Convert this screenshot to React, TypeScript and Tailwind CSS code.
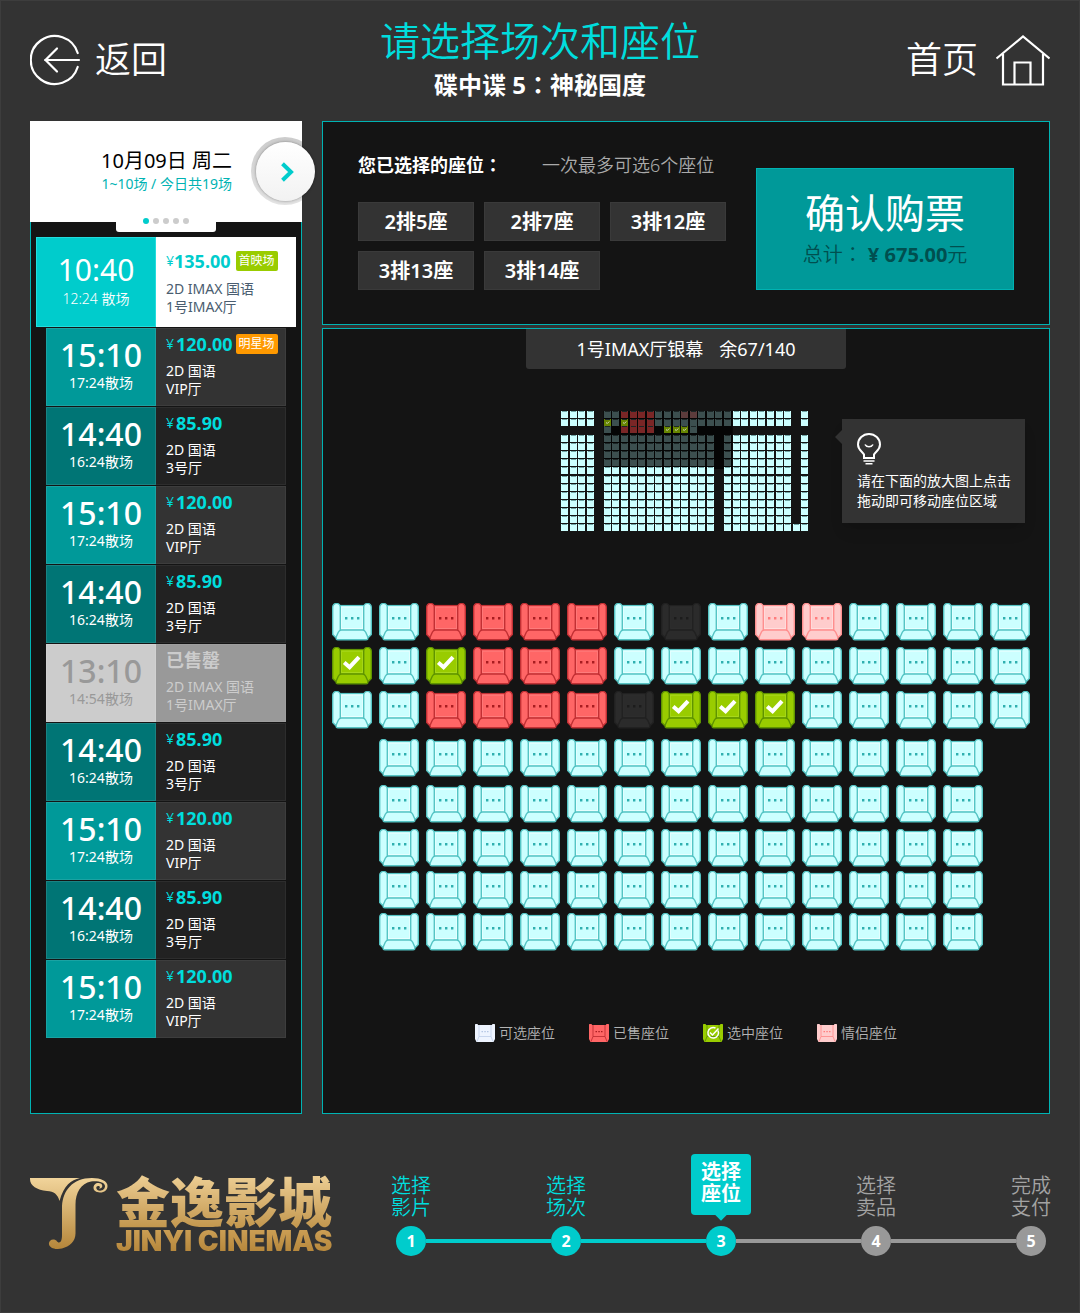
import React from "react";

type SeatKind = "free" | "sold" | "picked" | "couple" | "off";

const SEAT_COLOURS: Record<SeatKind, { fill: string; line: string; light: string; dot: string }> = {
  free: { fill: "#ccffff", line: "#55c4c4", light: "#e8ffff", dot: "#2fb0b0" },
  sold: { fill: "#ff6666", line: "#c23034", light: "#ff7c7c", dot: "#a81c20" },
  picked: { fill: "#99cc00", line: "#5f9400", light: "#a8d81c", dot: "#99cc00" },
  couple: { fill: "#ffcccc", line: "#ff8f8f", light: "#ffdede", dot: "#ff7c7c" },
  off: { fill: "#2b2b2b", line: "#212121", light: "#2d2d2d", dot: "#1c1c1c" },
};

const SEAT_NAMES: Record<SeatKind, string> = {
  free: "可选座位",
  sold: "已售座位",
  picked: "选中座位",
  couple: "情侣座位",
  off: "不可用座位",
};

const KIND: Record<string, SeatKind> = { A: "free", R: "sold", G: "picked", C: "couple", D: "off" };

function SeatArt({ kind }: { kind: SeatKind }) {
  const c = SEAT_COLOURS[kind];
  return (
    <svg viewBox="0 0 40 38" className="block h-full w-full" aria-hidden="true">
      <rect x="7" y="2.5" width="26" height="25" fill={c.fill} stroke={c.line} strokeWidth="1.2" />
      <path d="M9.3 25.5V4.2h21.4V25.5z" fill="none" stroke={c.light} strokeWidth="1" />
      <path d="M0.7 4.2a3.8 3.8 0 0 1 7.6 0V27L5 34H3.2L0.7 31.5z" fill={c.fill} stroke={c.line} strokeWidth="1.4" />
      <path d="M39.3 4.2a3.8 3.8 0 0 0-7.6 0V27l3.3 7h1.800l2.5-2.5z" fill={c.fill} stroke={c.line} strokeWidth="1.4" />
      <path
        d="M9.500 27h21c1.800 0 2.600.8 3.200 2.200l2.100 4.800c.5 1.900-.2 2.800-1.800 2.800H6c-1.600 0-2.300-.9-1.800-2.800l2.100-4.800c.6-1.400 1.400-2.200 3.200-2.200z"
        fill={c.fill}
        stroke={c.line}
        strokeWidth="1.4"
      />
      {kind === "picked" ? (
        <path d="M12.2 15.5l5.4 4.7 9.4-10" fill="none" stroke="#fff" strokeWidth="4" />
      ) : (
        <path d="M13 14h2.400v2.400H13zM19 14h2.400v2.400H19zM25 14h2.400v2.400H25z" fill={c.dot} />
      )}
    </svg>
  );
}

const SEAT_ROWS: { seats: string; space: string }[] = [
  { seats: "AARRRRADACCAAAA", space: "" },
  { seats: "GAGRRRAAAAAAAAA", space: "mt-1.5" },
  { seats: "AARRRRDGGGAAAAA", space: "mt-1.5" },
  { seats: "AAAAAAAAAAAAA", space: "mt-2.5" },
  { seats: "AAAAAAAAAAAAA", space: "mt-2" },
  { seats: "AAAAAAAAAAAAA", space: "mt-1.5" },
  { seats: "AAAAAAAAAAAAA", space: "mt-1" },
  { seats: "AAAAAAAAAAAAA", space: "mt-1" },
];

const MINI_ROWS = [
  "AAAA.AARRRRAAACCAAAAAAAAAAA.A",
  "AAAA.GAGRRRAAAAAAAAAAAAAAAA.A",
  ".....A.RRRR.GGGA.............",
  ...Array.from({ length: 11 }, () => "AAAA.AAAAAAAAAAAAA.AAAAAAAA.A"),
  "AAAA.AAAAAAAAAAAAA.AAAAAAAAAA",
];

const MINI_DIM: Record<string, string> = { A: "#3c4f4f", R: "#7a2626", G: "#668500", C: "#5c3c3c" };

function MiniMap() {
  return (
    <svg viewBox="0 0 248 121" className="block h-[121px] w-[248px]" role="img" aria-label="座位缩略图">
      <rect x="42.700" y="0" width="129" height="58" fill="#050505" />
      {MINI_ROWS.map((row, r) =>
        row.split("").map((s, c) => {
          if (s === ".") return null;
          const dim = r < 7 && c >= 5 && c <= 19;
          const x = Math.round(c * 8.58);
          const y = r === 2 ? 15 : Math.round(r * 8.07);
          return (
            <g key={`${r}-${c}`}>
              <rect x={x} y={y} width="7" height="7" fill={dim ? MINI_DIM[s] : "#ccffff"} />
              <path d={`M${x + 1} ${y + 0.5}h5`} stroke={dim ? "#1c2626" : "#6fa3a3"} strokeWidth="1" />
              {s === "G" && <path d={`M${x + 2} ${y + 3.5}l1.300 1 2-2`} stroke="#e6e6e6" fill="none" strokeWidth="0.800" />}
            </g>
          );
        }),
      )}
    </svg>
  );
}

type Show = { time: string; end: string; price: string; lines: [string, string]; tag?: string; tone: "light" | "dark" | "sold" };

const SHOWS: Show[] = [
  { time: "15:10", end: "17:24散场", price: "120.00", lines: ["2D 国语", "VIP厅"], tag: "明星场", tone: "light" },
  { time: "14:40", end: "16:24散场", price: "85.90", lines: ["2D 国语", "3号厅"], tone: "dark" },
  { time: "15:10", end: "17:24散场", price: "120.00", lines: ["2D 国语", "VIP厅"], tone: "light" },
  { time: "14:40", end: "16:24散场", price: "85.90", lines: ["2D 国语", "3号厅"], tone: "dark" },
  { time: "13:10", end: "14:54散场", price: "", lines: ["2D IMAX 国语", "1号IMAX厅"], tone: "sold" },
  { time: "14:40", end: "16:24散场", price: "85.90", lines: ["2D 国语", "3号厅"], tone: "dark" },
  { time: "15:10", end: "17:24散场", price: "120.00", lines: ["2D 国语", "VIP厅"], tone: "light" },
  { time: "14:40", end: "16:24散场", price: "85.90", lines: ["2D 国语", "3号厅"], tone: "dark" },
  { time: "15:10", end: "17:24散场", price: "120.00", lines: ["2D 国语", "VIP厅"], tone: "light" },
];

const TONES = {
  light: { time: "bg-[#009999] text-white", info: "bg-[#333333] text-white" },
  dark: { time: "bg-[#007575] text-white", info: "bg-[#222222] text-white" },
  sold: { time: "bg-[#cccccc] text-[#999999]", info: "bg-[#999999] text-[#cccccc]" },
};

function ShowItem({ show }: { show: Show }) {
  const tone = TONES[show.tone];
  return (
    <li>
      <button type="button" disabled={show.tone === "sold"} className="flex h-[78px] w-full text-left">
        <span className={`flex w-[110px] shrink-0 flex-col items-center border border-white/10 pt-2 ${tone.time}`}>
          <span className="text-[32px] leading-9 font-medium">{show.time}</span>
          <span className="text-sm leading-5">{show.end}</span>
        </span>
        <span className={`flex h-full flex-1 flex-col border-y border-r border-white/5 pt-[3px] pl-2.5 ${tone.info}`}>
          {show.tone === "sold" ? (
            <span className="text-lg leading-6 font-bold">已售罄</span>
          ) : (
            <span className="flex h-6 items-center text-[#00dddd]">
              <span className="w-2.5 text-sm leading-5">¥</span>
              <span className="text-lg leading-6 font-bold">{show.price}</span>
              {show.tag && (
                <span className="ml-[3px] rounded-xs bg-[#ff9900] px-[3px] text-xs leading-5 whitespace-nowrap text-white">{show.tag}</span>
              )}
            </span>
          )}
          <span className="mt-1.5 text-sm leading-[18px]">
            {show.lines[0]}
            <br />
            {show.lines[1]}
          </span>
        </span>
      </button>
    </li>
  );
}

function Colon() {
  return <span className="leading-none font-['Noto_Sans_CJK_TC',sans-serif]">：</span>;
}

const STEPS = [
  { a: "选择", b: "影片", state: "done" },
  { a: "选择", b: "场次", state: "done" },
  { a: "选择", b: "座位", state: "now" },
  { a: "选择", b: "卖品", state: "next" },
  { a: "完成", b: "支付", state: "next" },
];

export default function App() {
  return (
    <div className="min-h-screen border border-[#3d3d3d] bg-[#333333] px-[29px] font-['Noto_Sans','Noto_Sans_CJK_SC',sans-serif] text-white">
      <header className="grid h-[120px] grid-cols-[1fr_auto_1fr] items-start">
        <a href="#back" className="mt-[33px] flex items-center gap-[13px] justify-self-start">
          <svg viewBox="0 0 52 52" className="h-[52px] w-[52px]" fill="none" stroke="#fff" strokeWidth="2.200" strokeLinecap="round" aria-hidden="true">
            <path d="M47.700 19A24 24 0 1 0 47.700 33" />
            <path d="M49 26H15M27 14.500L15.500 26 27 37.500" />
          </svg>
          <span className="text-4xl leading-[52px] font-[350]">返回</span>
        </a>
        <div className="pt-[14px] text-center">
          <h1 className="text-[40px] leading-[52px] font-[350] text-[#00dddd]">请选择场次和座位</h1>
          <p className="text-2xl leading-9 font-bold">
            碟中谍 5<Colon />
            神秘国度
          </p>
        </div>
        <a href="#home" className="mt-[33px] flex items-center gap-4 justify-self-end">
          <span className="text-4xl leading-[52px] font-[350]">首页</span>
          <svg viewBox="0 0 56 52" className="h-[52px] w-14" fill="none" stroke="#fff" strokeWidth="2.200" aria-hidden="true">
            <path d="M2.500 24.500L29 2.500l26.500 22" />
            <path d="M9 20v30.500h40V20" />
            <path d="M20.500 50V28.500h16V50" />
          </svg>
        </a>
      </header>

      <main className="flex gap-5">
        <aside className="flex w-[272px] shrink-0 flex-col border border-[#00b3b3] bg-[#141414]">
          <div className="relative -mx-px -mt-px h-[101px] bg-white">
            <div className="absolute inset-0 overflow-hidden">
              <span className="absolute top-4 left-[221px] h-[68px] w-[68px] rounded-full bg-linear-to-b from-[#cccccc] to-[#e3e3e3]" />
            </div>
            <div className="pt-[27px] pr-[70px] text-right">
              <p className="text-xl leading-[26px] text-black">10月09日 周二</p>
              <p className="text-sm leading-5 text-[#00b3b3]">1~10场 / 今日共19场</p>
            </div>
            <div className="absolute top-[94px] left-[86px] flex h-[17px] w-[100px] justify-center gap-1 rounded-b-[3px] bg-white pt-[3px]">
              <span className="h-1.5 w-1.5 rounded-full bg-[#00cccc]" />
              <span className="h-1.5 w-1.5 rounded-full bg-[#cccccc]" />
              <span className="h-1.5 w-1.5 rounded-full bg-[#cccccc]" />
              <span className="h-1.5 w-1.5 rounded-full bg-[#cccccc]" />
              <span className="h-1.5 w-1.5 rounded-full bg-[#cccccc]" />
            </div>
            <button
              type="button"
              aria-label="后一天"
              className="absolute top-[21px] left-[226px] flex h-[59px] w-[59px] items-center justify-center rounded-full bg-linear-to-b from-white to-[#f2f2f2] shadow-[0_0_3px_rgba(0,0,0,0.4)]"
            >
              <svg viewBox="0 0 16 20" className="ml-1 h-5 w-4" fill="none" stroke="#00cccc" strokeWidth="4" aria-hidden="true">
                <path d="M2.500 1.800L11 10l-8.500 8.200" />
              </svg>
            </button>
          </div>
          <div className="mt-[15px] px-[5px]">
            <button type="button" aria-pressed="true" className="flex h-[90px] w-full bg-white text-left">
              <span className="flex w-[120px] flex-col items-center border border-[#22dddd] bg-[#00cccc] pt-3">
                <span className="text-3xl leading-10">10:40</span>
                <span className="text-sm leading-[18px] font-[350]">12:24 散场</span>
              </span>
              <span className="flex flex-1 flex-col pt-3 pl-2.5">
                <span className="flex h-6 items-center text-[#00cccc]">
                  <span className="w-2 text-sm leading-5">¥</span>
                  <span className="text-lg leading-6 font-bold">135.00</span>
                  <span className="ml-[5px] rounded-xs bg-[#99cc00] px-[3px] text-xs leading-5 whitespace-nowrap text-white">首映场</span>
                </span>
                <span className="mt-[7px] text-sm leading-[18px] text-[#4a5d70]">
                  2D IMAX 国语
                  <br />
                  1号IMAX厅
                </span>
              </span>
            </button>
          </div>
          <ul className="mt-px flex flex-col gap-px px-[15px]">
            {SHOWS.map((s, i) => (
              <ShowItem key={i} show={s} />
            ))}
          </ul>
        </aside>

        <div className="flex min-w-0 flex-1 flex-col gap-[3px]">
          <section className="flex min-h-[204px] justify-between border border-[#00b3b3] bg-[#141414] pr-[35px] pl-[35px]">
            <div className="pt-[30px]">
              <div className="flex h-[26px] gap-10 text-lg leading-[26px]">
                <h2 className="font-bold">
                  您已选择的座位
                  <Colon />
                </h2>
                <p className="font-[350] text-[#aaaaaa]">一次最多可选6个座位</p>
              </div>
              <ul className="mt-6 grid w-[368px] grid-cols-3 gap-2.5">
                {["2排5座", "2排7座", "3排12座", "3排13座", "3排14座"].map((s) => (
                  <li key={s}>
                    <button type="button" className="h-[39px] w-full border border-[#3a3a3a] bg-[#333333] text-xl leading-9 font-semibold">
                      {s}
                    </button>
                  </li>
                ))}
              </ul>
            </div>
            <button type="button" className="mt-[46px] flex h-[122px] w-[258px] flex-col items-center border border-[#00b3b3] bg-[#009999] pt-[18px]">
              <span className="text-[40px] leading-[52px]">确认购票</span>
              <span className="text-xl leading-8 font-[350] text-[#004f4f]">
                总计
                <Colon /> <b className="font-bold">¥ 675.00</b>元
              </span>
            </button>
          </section>

          <section className="flex min-h-[786px] flex-col border border-[#00b3b3] bg-[#141414]">
            <div className="flex h-10 w-80 justify-center gap-4 self-center rounded-b-[3px] bg-[#333333] text-lg leading-10">
              <span>1号IMAX厅银幕</span>
              <span>余67/140</span>
            </div>
            <div className="mt-[42px] flex items-start justify-end gap-[33px] pr-6">
              <MiniMap />
              <div className="relative mt-2 h-[104px] w-[183px] bg-[#333333] pt-3.5 pl-[15px] shadow-lg">
                <svg viewBox="0 0 8 16" className="absolute top-2.5 -left-[7px] h-4 w-2" aria-hidden="true">
                  <path d="M8 0v16L0 8z" fill="#333333" />
                </svg>
                <svg viewBox="0 0 24 32" className="h-8 w-6" fill="none" stroke="#fff" strokeWidth="2" aria-hidden="true">
                  <path d="M7 25v-3.500C5.500 18.500 1 17 1 11.500a11 10.500 0 0 1 22 0C23 17 18.500 18.500 17 21.500V25z" />
                  <path d="M8 11.500c1.500 3 6.500 3 8 0" strokeWidth="1.600" />
                  <path d="M6.500 28h11M8.500 30.800h7" strokeWidth="1.600" />
                </svg>
                <p className="mt-1.5 text-sm leading-5 whitespace-nowrap">
                  请在下面的放大图上点击
                  <br />
                  拖动即可移动座位区域
                </p>
              </div>
            </div>
            <div className="mt-[71px] flex flex-col items-center pr-2.5">
              {SEAT_ROWS.map((row, r) => (
                <div key={r} className={`flex gap-[7px] ${row.space}`}>
                  {row.seats.split("").map((s, c) => (
                    <button
                      key={c}
                      type="button"
                      aria-label={`${r + 1}排${c + 1}座 ${SEAT_NAMES[KIND[s]]}`}
                      disabled={s === "R" || s === "D"}
                      className="h-[38px] w-10"
                    >
                      <SeatArt kind={KIND[s]} />
                    </button>
                  ))}
                </div>
              ))}
            </div>
            <ul className="mt-[72px] flex justify-center gap-[34px] text-sm leading-5 font-[350] text-[#b3b3b3]">
              {(["free", "sold", "picked", "couple"] as SeatKind[]).map((k) => (
                <li key={k} className="flex items-center gap-1">
                  <LegendSeat kind={k} />
                  <span>{SEAT_NAMES[k]}</span>
                </li>
              ))}
            </ul>
          </section>
        </div>
      </main>

      <footer className="flex justify-between pt-10">
        <div className="flex pt-[23px]">
          <svg viewBox="0 0 78 72" className="h-[72px] w-[78px]" aria-hidden="true">
            <defs>
              <linearGradient id="gold" gradientUnits="userSpaceOnUse" x1="0" y1="0" x2="0" y2="72">
                <stop offset="0" stopColor="#f2d59c" />
                <stop offset="1" stopColor="#b5863a" />
              </linearGradient>
            </defs>
            <path fill="url(#gold)" d="M0 1h50C41 3 34 8 29.500 24C27.500 17 24 14.500 17 14C7 13 0 9 0 2z" />
            <path
              fill="url(#gold)"
              d="M32 58V29C33 14 42 1 62 1c9 0 15.500 3 15.500 8 0 4-3 6.500-7.500 6.500-4 0-6.500-2-6.500-4.700S65.500 6 68.300 6c2.500 0 4 1.200 4 3s-2 3-3.500 2.200c1.200-.2 1.500-1.400.5-2-1.500-.8-3 0-3 1.600 0 1.800 1.700 2.900 3.700 2.900 3 0 5-2 5-4.700C75 5 67 3.500 61 4.500c-10 2-15.500 11-15.500 23v29c0 8-6 13-13.500 15-7 1.500-12-.5-13-4-.6-3 2-5.500 5-5 3 .4 3 3 5 3 2 0 3-3 3-7.500z"
            />
          </svg>
          <div className="ml-2 flex flex-col">
            <span className="-mt-2 bg-linear-to-b from-[#f2d59c] to-[#c2964c] bg-clip-text pt-1.5 text-[54px] leading-[54px] font-black text-transparent">
              金逸影城
            </span>
            <span className="bg-linear-to-b from-[#cc9f55] to-[#b5863a] bg-clip-text font-['Inter',sans-serif] text-[28px] leading-6 font-black text-transparent">
              JINYI CINEMAS
            </span>
          </div>
        </div>
        <ol className="-mr-px flex w-[660px] justify-between">
          {STEPS.map((s, i) => (
            <li
              key={i}
              className={`relative flex w-10 flex-col items-center ${s.state === "next" ? "text-[#a3a3a3]" : "text-[#00dddd]"}`}
            >
              {i > 0 && (
                <span className={`absolute top-[85px] right-[35px] h-1 w-[125px] ${s.state === "next" ? "bg-[#999999]" : "bg-[#00cccc]"}`} />
              )}
              {s.state === "now" ? (
                <span className="relative flex h-[61px] w-[60px] justify-center rounded-sm bg-[#00cccc] pt-[7px] text-xl leading-[22px] font-bold text-white">
                  <span>
                    {s.a}
                    <br />
                    {s.b}
                  </span>
                  <span className="absolute -bottom-1 h-2 w-2 rotate-45 bg-[#00cccc]" />
                </span>
              ) : (
                <span className="h-[61px] pt-[21px] text-xl leading-[22px] font-[350] whitespace-nowrap">
                  {s.a}
                  <br />
                  {s.b}
                </span>
              )}
              <span
                className={`relative mt-[11px] flex h-[30px] w-[30px] items-center justify-center rounded-full text-base font-bold text-white ${
                  s.state === "next" ? "bg-[#999999]" : "bg-[#00cccc]"
                }`}
              >
                {i + 1}
              </span>
            </li>
          ))}
        </ol>
      </footer>
    </div>
  );
}

function LegendSeat({ kind }: { kind: SeatKind }) {
  const c =
    kind === "free"
      ? { fill: "#eef4ff", line: "#c3d3ec", dot: "#b4c6e4" }
      : { fill: SEAT_COLOURS[kind].fill, line: SEAT_COLOURS[kind].line, dot: SEAT_COLOURS[kind].dot };
  return (
    <svg viewBox="0 0 20 18" className="h-[18px] w-5" aria-hidden="true">
      <path d="M0 1.500a1.500 1.500 0 0 1 3-.5h14a1.500 1.500 0 0 1 3 .5V15l-1.500 3h-17L0 15z" fill={c.fill} />
      <path d="M4 1v11.500h12V1M4 12.500L2 17.500M16 12.500l2 5" fill="none" stroke={c.line} strokeWidth="0.900" />
      {kind === "picked" ? (
        <g fill="none" stroke="#fff" strokeWidth="1.500">
          <path d="M15 6.500A5.300 5.300 0 1 1 12.500 4" />
          <path d="M7 8.500l2.500 2.500L15.500 4.500" />
        </g>
      ) : (
        <path d="M6.500 7h1.500v1.200H6.500zM9.300 7h1.500v1.200H9.300zM12 7h1.500v1.200H12z" fill={c.dot} />
      )}
    </svg>
  );
}
